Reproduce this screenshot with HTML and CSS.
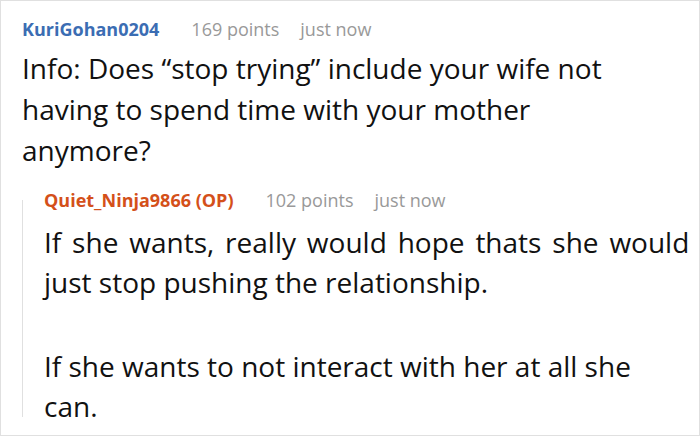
FILE: index.html
```html
<!DOCTYPE html>
<html>
<head>
<meta charset="utf-8">
<link rel="stylesheet" href="styles.css">
</head>
<body>
<div class="frame">
  <div class="comment">
    <div class="meta">
      <span class="user user-blue">KuriGohan0204</span>
      <span class="info points">169 points</span>
      <span class="info">just now</span>
    </div>
    <div class="body">
      <p>Info: Does “stop trying” include your wife not<br>having to spend time with your mother<br>anymore?</p>
    </div>
    <div class="reply">
      <div class="meta">
        <span class="user user-orange">Quiet_Ninja9866 (OP)</span>
        <span class="info points">102 points</span>
        <span class="info">just now</span>
      </div>
      <div class="body rbody">
        <p><span class="wide">If she wants, really would hope thats she would</span><br>just stop pushing the relationship.</p>
        <p>If she wants to not interact with her at all she<br>can.</p>
      </div>
    </div>
  </div>
</div>
</body>
</html>
```

FILE: styles.css
```css
html, body {
  margin: 0;
  padding: 0;
  background: #fff;
}
body {
  font-family: "Open Sans", "Noto Sans", sans-serif;
  color: #111;
}
.frame {
  box-sizing: border-box;
  width: 700px;
  height: 436px;
  border: 1px solid #e0e0e0;
  padding: 16px 0 0 21px;
  overflow: hidden;
}
.meta {
  display: flex;
  font-size: 18px;
  line-height: 24px;
}
.user {
  font-weight: 700;
  margin-right: 32px;
}
.points { margin-right: 21px; }
.user-blue { color: #3b6db3; }
.user-orange { color: #d4501a; }
.info { color: #999; }
.body {
  margin-top: 7px;
}
.body p {
  margin: 0;
  font-size: 28px;
  line-height: 41px;
  white-space: nowrap;
}
.reply {
  position: relative;
  margin-top: 17px;
  padding-left: 22px;
}
.reply::before {
  content: "";
  position: absolute;
  left: 0;
  top: 12px;
  bottom: 9px;
  width: 1px;
  background: #e0e0e0;
}
.rbody {
  margin-top: 10px;
}
.rbody p { line-height: 40px; }
.rbody p + p { margin-top: 44px; }
.wide { word-spacing: 3.6px; }
```
